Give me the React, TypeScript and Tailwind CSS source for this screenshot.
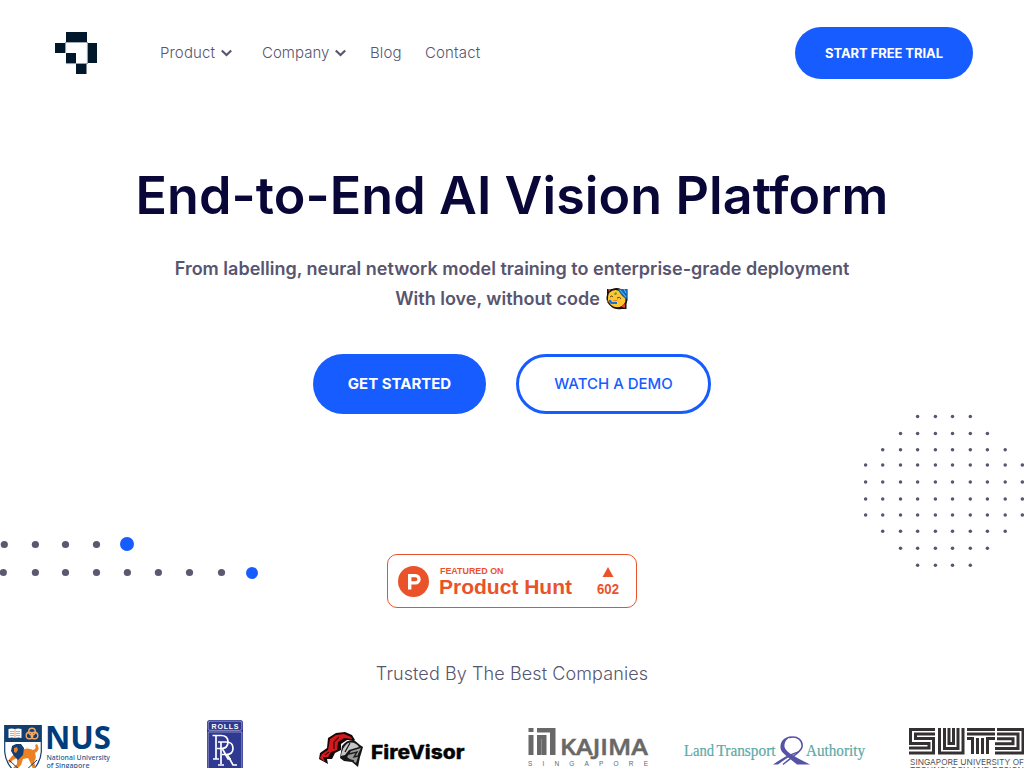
import React from "react";

const INTER = "font-['Inter',sans-serif]";

function Chevron() {
  return (
    <svg width="11" height="8" viewBox="0 0 11 8" fill="none" className="-mt-px">
      <path d="M.8 1.4 5.5 6 10.2 1.4" stroke="#57556f" strokeWidth="2.1" />
    </svg>
  );
}

function BrandMark() {
  return (
    <svg width="44" height="44" viewBox="0 0 44 44" fill="#00172c">
      <path d="M10.5 11.3H32M10.6 11V22M32.4 11V33M11 32.6H32" stroke="#8b949d" strokeWidth="1" fill="none" />
      <rect x="11" y="1" width="21" height="10" />
      <rect x="0" y="12" width="10" height="10" />
      <rect x="33" y="12" width="9" height="20" />
      <rect x="11" y="22" width="10" height="10" />
      <rect x="21" y="33" width="10.5" height="10" />
    </svg>
  );
}

function Header() {
  return (
    <header className="flex h-[106px] items-center pl-[55px] pr-[51px]">
      <BrandMark />
      <nav className="ml-[61px] flex items-center text-[15px] font-[340] leading-6 text-[#57556f]">
        <a className="flex w-[102px] items-center gap-[6px]"><span className="tracking-[0.15px]">Product</span><Chevron /></a>
        <a className="flex w-[108px] items-center gap-[6px]"><span className="tracking-[0.02px]">Company</span><Chevron /></a>
        <a className="w-[55px] tracking-[0.1px]">Blog</a>
        <a className="tracking-[0.15px]">Contact</a>
      </nav>
      <a className="ml-auto flex h-[52px] w-[178px] items-center justify-center rounded-full bg-[#175cff] pt-px text-[13px] font-bold tracking-[-0.07px] text-white">
        START FREE TRIAL
      </a>
    </header>
  );
}

function PartyFace() {
  return (
    <svg width="22" height="22" viewBox="0 0 22 22">
      <path d="M1 1h5q5-2 9 0h6.500v11l-1 4v5h-5q-7 1-11-3Q-1 13 1 7Z" fill="#111" />
      <path d="M3 5Q8 0 13 3L19 9Q21 14 16 18 10 21 5 17 0 12 3 5Z" fill="#ffc62f" />
      <path d="m12 1 9 0v10q-6-2-9-10Z" fill="#1763b6" />
      <path d="m14 2 6 7M18 1l2 4" stroke="#58b9f1" strokeWidth="1.1" />
      <path d="M2 1h3L3 4ZM1 12l2 2-2 1ZM16 17l3-1 0 4-3-1Z" fill="#ee3e2b" />
      <path d="m8 6 2-2 1 2-2 1Z" fill="#23a455" />
      <path d="M4 9q2-2 3 0M11 10q3-2 4 1" stroke="#63401a" fill="none" />
      <path d="M3 12q2-1 3 2h5v2H6q-3 0-3-4Z" fill="#1971cb" />
      <path d="M7 12q3 1 5-1-1 3-4 2Z" fill="#e9732c" />
    </svg>
  );
}

const dotRows: [number, number, number][] = [
  [416.5, 3, 6], [433.5, 2, 7], [449.7, 1, 8], [465, 0, 9], [482, 0, 9],
  [499, 0, 9], [515, 0, 9], [531.3, 1, 8], [548.3, 2, 7], [565.3, 3, 6],
];
const dotColumns = [865.6, 882.7, 900.5, 917.6, 935.4, 952.5, 970.3, 987.4, 1005.2, 1022.3];

function DotGlobe() {
  return (
    <svg className="absolute left-[860px] top-[410px]" width="164" height="160" viewBox="860 410 164 160" fill="#57556f">
      {dotRows.map(([y, from, to]) =>
        dotColumns.slice(from, to + 1).map((x) => <circle key={`${x}-${y}`} cx={x} cy={y} r="1.75" />)
      )}
    </svg>
  );
}

function DotTrails() {
  return (
    <svg className="absolute left-0 top-[530px]" width="270" height="56" viewBox="0 530 270 56" fill="#5b596f">
      {[4.3, 35.4, 65.5, 96.5].map((x) => <circle key={x} cx={x} cy="544.5" r="3.6" />)}
      {[3.3, 35.4, 65.5, 96.5, 127.4, 158.4, 189.5, 221.5].map((x) => <circle key={x} cx={x} cy="572.5" r="3.6" />)}
      <circle cx="127" cy="544" r="7" fill="#175cff" />
      <circle cx="252" cy="573" r="6" fill="#175cff" />
    </svg>
  );
}

function ProductHuntBadge() {
  return (
    <a className="flex h-[54px] w-[250px] items-center rounded-[10px] border border-[#ea532a] bg-white pl-[10px] pr-[16.5px] font-['Liberation_Sans',Arial,sans-serif] font-bold text-[#ea532a]">
      <svg width="31" height="31" viewBox="0 0 31 31">
        <circle cx="15.5" cy="15.5" r="15.5" fill="#ea532a" />
        <path fillRule="evenodd" fill="#fff" d="M10 8h7.500a5.2 5.2 0 0 1 0 10.4h-4.100v5H10Zm3.400 3.200v4h4a2 2 0 0 0 0-4Z" />
      </svg>
      <div className="ml-[10px] flex flex-col pt-[2px]">
        <svg width="66" height="10" viewBox="0 0 66 10">
          <text x="1" y="8.2" fill="#ea532a" fontSize="9.3" fontWeight="700" textLength="63.5" lengthAdjust="spacingAndGlyphs">FEATURED ON</text>
        </svg>
        <span className="text-[21px] leading-[22px]">Product Hunt</span>
      </div>
      <div className="ml-auto flex w-[23px] flex-col items-center pt-[2px]">
        <svg width="12" height="10" viewBox="0 0 12 10"><path d="M6 0 11.500 10H.5Z" fill="#ea532a" /></svg>
        <svg width="24" height="16" viewBox="0 0 24 16" className="mt-[4px] shrink-0">
          <text x="1" y="12.500" fill="#ea532a" fontSize="14" fontWeight="700" textLength="22" lengthAdjust="spacingAndGlyphs">602</text>
        </svg>
      </div>
    </a>
  );
}

function NusLogo() {
  return (
    <svg width="108" height="52" viewBox="0 0 108 52">
      <path d="M.7.7H37.300V27Q36 43 19 52 2 43 .7 27Z" fill="#fff" stroke="#123e70" strokeWidth="1.2" />
      <path d="M1 1H37V17H1Z" fill="#123e70" />
      <path d="M4.500 4q3-1 6.500 0 3-1 6.500 0v9q-3-1-6.500 0-3-1-6.500 0Z" fill="#fff" />
      <path d="M11 4v9M6 6.500h4m2 0h4M6 8.500h4m2 0h4M6 10.500h4m2 0h4" stroke="#ef9b4b" strokeWidth=".9" fill="none" />
      <g fill="none" stroke="#f4aa67" strokeWidth="1.4"><circle cx="28" cy="6.500" r="3.300" /><circle cx="25.500" cy="10.500" r="3.300" /><circle cx="30.500" cy="10.500" r="3.300" /></g>
      <path d="M17 25q7-3 12 0 4-1 2-5l2-1q4 6-2 9 2 5-1 9l2 6-3 1-3-7-2-4-5 1-2 6-5 5-3-2 4-4 0-6-4 2-3 3-2-2 4-5Z" fill="#eb8122" />
      <path d="m8 21 4-2 5 0 3 4-1 7-5 5-4-4-3-5Z" fill="#153f70" />
      <path d="m10 23 3-1 1 3-2 3-2-1Z" fill="#eb8122" />
      <path d="m5 35 14 13 14-13" fill="none" stroke="#123e70" />
      <g fill="#003d7c" fontFamily="Open Sans, sans-serif" fontWeight="700">
        <text x="41" y="24.300" fontSize="31.500" textLength="66" lengthAdjust="spacingAndGlyphs">NUS</text>
        <g fontSize="7.400" fontWeight="600" fillOpacity=".85"><text x="42.500" y="34.500" textLength="63.500" lengthAdjust="spacingAndGlyphs">National University</text>
        <text x="42.500" y="43" textLength="43" lengthAdjust="spacingAndGlyphs">of Singapore</text></g>
      </g>
    </svg>
  );
}

function RollsLogo() {
  return (
    <svg width="36" height="58" viewBox="0 0 36 58">
      <rect width="36" height="58" rx="3" fill="#303991" />
      <rect x="1.200" y="1.200" width="33.600" height="9.200" rx="2" fill="none" stroke="#c3c5e2" strokeWidth=".6" />
      <path d="M1.200 12H34.800V58M1.200 12V58" fill="none" stroke="#c3c5e2" strokeWidth=".6" />
      <text x="4.500" y="8.500" fill="#fff" fontFamily="Liberation Sans, sans-serif" fontSize="7" fontWeight="700" textLength="27">ROLLS</text>
      <g fill="none" stroke="#fff" strokeWidth="1.700">
        <path d="M5.500 15.500H14q7 0 7 6.500t-7 6.500h-4M9 15.500V39M6 39h6M15 28l6 11h3" />
        <path d="M11 22h8q7 0 7 6.300t-7 6.200h-4M14 22v22M11 45h6M20 34l6 11h4" />
      </g>
    </svg>
  );
}

function FireVisorLogo() {
  return (
    <svg width="147" height="40" viewBox="0 0 147 40">
      <path d="M0 28 1 22 8 17 9 7 17 2 26 1 33 4 36 9 28 9 22 13 22 19 16 22 13 28 8 28 9 33Z" fill="#160708" />
      <path d="m1 27 2-4 6-4 1-5 1-6 6-4 8-1 7 3 1 2-8-1-6 4-1 8-6 2-3 5-5 0 2 5Z" fill="#d8191b" />
      <path d="M15 18V11l5-5M10 21l-4 3" stroke="#350708" strokeWidth="1.200" fill="none" />
      <path d="M21 27 23 15q5-7 12-6l6 5 3 2-2 7-1 3-2 10-6-5-8-1-4-3Z" fill="#151515" />
      <path d="M22 25q1-9 7-13 7-2 11 4l-10 3-4 5Z" fill="#c7c7c7" />
      <path d="m28 26 4-6 10-3-3 6 0 3-2 6-5-3Z" fill="#999" />
      <path d="m30 23 8-2-3 5 4-1M27 28l8 2M31 12l-5 9" stroke="#1b1b1b" strokeWidth="1.300" fill="none" />
      <text x="52" y="27.500" fill="#050505" stroke="#050505" strokeWidth=".3" fontFamily="Inter, sans-serif" fontSize="19" fontWeight="800" textLength="93.500" lengthAdjust="spacingAndGlyphs">FireVisor</text>
    </svg>
  );
}

function KajimaLogo() {
  return (
    <svg width="121" height="40" viewBox="0 0 121 40" fill="#686868">
      <path d="M.5 0h5v4h-5ZM.5 7h5v20h-5ZM9 0H27.500v27h-5.500V4.500H9ZM9 7H18.500V27H13.500V11H9Z" />
      <path d="M9 7h4.500v20H9Z" />
      <text x="32" y="26.500" fontFamily="Open Sans, sans-serif" fontSize="22" fontWeight="600" stroke="#686868" strokeWidth=".5" textLength="88" lengthAdjust="spacingAndGlyphs">KAJIMA</text>
      <text x="0" y="37.500" fontFamily="Liberation Sans, sans-serif" fontSize="6.500" textLength="120">SINGAPORE</text>
    </svg>
  );
}

function LtaLogo() {
  return (
    <svg width="182" height="36" viewBox="0 0 182 36">
      <g fill="#5ca9a7" fontFamily="Liberation Serif, serif" fontSize="16" stroke="#5ca9a7" strokeWidth=".2">
        <text x="0" y="20.500" textLength="30" lengthAdjust="spacingAndGlyphs">Land</text>
        <text x="32.500" y="20.500" textLength="59" lengthAdjust="spacingAndGlyphs">Transport</text>
        <text x="122" y="20.500" textLength="59" lengthAdjust="spacingAndGlyphs">Authority</text>
      </g>
      <path fill="#5652a5" d="M108 1.500C100 1 96 7 96.500 13 97 18 103 21 113 29.500H126C112 22 102 18 100.500 12 100 7 103 3 108 1.500Z" />
      <path d="M105 2.500C114 0 119 6 118 12 117 17 110 20 99 29.500" stroke="#5652a5" strokeWidth="1.500" fill="none" />
      <path d="M115 16Q104 19 89 29.500H94Q105 21 115 17Z" fill="#5652a5" />
    </svg>
  );
}

function SutdLogo() {
  return (
    <svg width="116" height="40" viewBox="0 0 116 40">
      <g fill="none" stroke="#353132" strokeWidth="3">
        <path d="M26 1.500H1.500V15.500H20V20H0M26 6H6.500V10.500H24.500V25H0" />
        <path d="M30.500 0V25H54V0M35.500 0V20.500H49V0M40 0V15.500H44.500V0" />
        <path d="M58 1.500H86M58 6H86M63.500 10V26M68.500 10V26M73.500 10V26M78.500 10V26M58 10.500H65M77 10.500H86" />
        <path d="M88 1.500H114V25H86M88 6H109V20.500H86M88 10.700H104V15.700H86" />
      </g>
      <g fill="#575556" fontFamily="Inter, sans-serif" fontSize="8.200">
        <text x="1" y="37" textLength="114" lengthAdjust="spacingAndGlyphs">SINGAPORE UNIVERSITY OF</text>
        <text x="1" y="45" textLength="114" lengthAdjust="spacingAndGlyphs">TECHNOLOGY AND DESIGN</text>
      </g>
    </svg>
  );
}

export default function App() {
  return (
    <div className={`relative h-[768px] w-[1024px] overflow-hidden bg-white ${INTER}`}>
      <DotGlobe />
      <DotTrails />
      <Header />
      <main className="flex flex-col items-center">
        <h1 className="mt-[57px] whitespace-nowrap text-[52px] font-semibold leading-[66px] tracking-[0.09px] text-[#090638]">
          End-to-End AI Vision Platform
        </h1>
        <div className="mt-[25px] text-center text-[18px] font-semibold leading-[30px] text-[#57556f]">
          <p>From labelling, neural network model training to enterprise-grade deployment</p>
          <p className="flex items-center justify-center gap-[6px] pr-px">With love, without code <PartyFace /></p>
        </div>
        <div className="mt-[40px] flex gap-[30px] text-[15px]">
          <a className="flex h-[60px] w-[173px] items-center justify-center rounded-full bg-[#175cff] font-bold text-white">GET STARTED</a>
          <a className="flex h-[60px] w-[195px] items-center justify-center rounded-full border-[3px] border-[#175cff] font-[550] tracking-[-0.01px] text-[#175cff]">WATCH A DEMO</a>
        </div>
        <div className="mt-[140px]"><ProductHuntBadge /></div>
        <h2 className="mt-[51px] whitespace-nowrap text-[18px] font-[340] leading-[30px] tracking-[0.1px] text-[#57556f]">
          Trusted By The Best Companies
        </h2>
        <section className="mt-[31px] flex h-[60px] w-full items-start pl-[4px]">
          <div className="w-[203px] shrink-0 pt-[5px]"><NusLogo /></div>
          <div className="w-[112px] shrink-0"><RollsLogo /></div>
          <div className="w-[209px] shrink-0 pt-[11px]"><FireVisorLogo /></div>
          <div className="w-[156px] shrink-0 pt-[8px]"><KajimaLogo /></div>
          <div className="w-[225px] shrink-0 pt-[15px]"><LtaLogo /></div>
          <div className="shrink-0 pt-[8px]"><SutdLogo /></div>
        </section>
      </main>
    </div>
  );
}
